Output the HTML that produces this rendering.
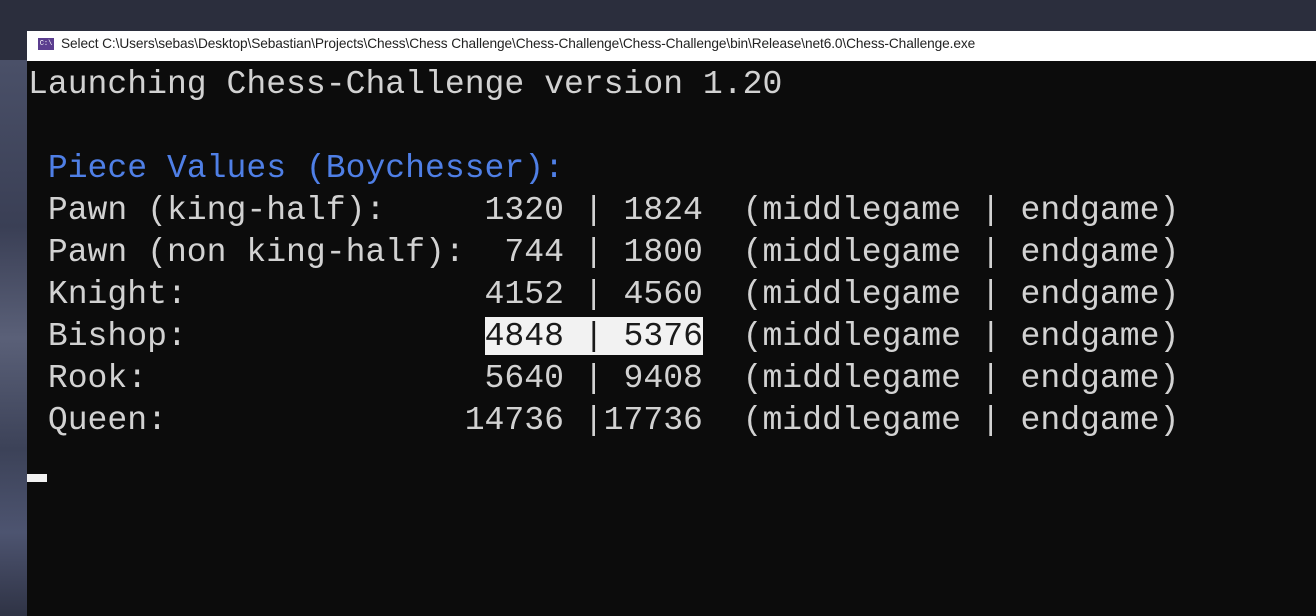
<!DOCTYPE html>
<html><head><style>
html,body{margin:0;padding:0;}
body{width:1316px;height:616px;overflow:hidden;background:#2b2e3d;position:relative;font-family:"Liberation Sans",sans-serif;}
.strip{position:absolute;left:0;top:60px;width:27px;height:556px;background:linear-gradient(180deg,#4a5068 0%,#3a3f55 30%,#5a6078 50%,#3c4258 70%,#4d5470 85%,#2f3345 100%);}
.title{position:absolute;left:27px;top:31px;width:1289px;height:30px;background:#fff;}
.title .ic{position:absolute;left:11px;top:7px;width:16px;height:12px;background:#5b3e8f;color:#fff;font-size:7px;line-height:12px;text-align:center;font-family:"Liberation Mono",monospace;}
.title .t{position:absolute;left:34px;top:5px;font-size:13.7px;color:#222;white-space:nowrap;letter-spacing:-0.1px;}
.con{position:absolute;left:27px;top:61px;width:1289px;height:555px;background:#0c0c0c;}
pre{margin:0;position:absolute;left:1px;top:2px;font-family:"Liberation Mono",monospace;font-size:33.1px;line-height:42px;color:#d2d2d2;}
.b{color:#4f7fe6;}
.h{background:#f2f2f2;color:#1a1a1a;}
.cur{position:absolute;left:0;top:413px;width:20px;height:8px;background:#f2f2f2;}
</style></head><body>
<div class="strip"></div>
<div class="title"><div class="ic">C:\</div><div class="t">Select C:\Users\sebas\Desktop\Sebastian\Projects\Chess\Chess Challenge\Chess-Challenge\Chess-Challenge\bin\Release\net6.0\Chess-Challenge.exe</div></div>
<div class="con">
<pre>Launching Chess-Challenge version 1.20

<span class="b"> Piece Values (Boychesser):</span>
 Pawn (king-half):     1320 | 1824  (middlegame | endgame)
 Pawn (non king-half):  744 | 1800  (middlegame | endgame)
 Knight:               4152 | 4560  (middlegame | endgame)
 Bishop:               <span class="h">4848 | 5376</span>  (middlegame | endgame)
 Rook:                 5640 | 9408  (middlegame | endgame)
 Queen:               14736 |17736  (middlegame | endgame)</pre>
<div class="cur"></div>
</div>
</body></html>
